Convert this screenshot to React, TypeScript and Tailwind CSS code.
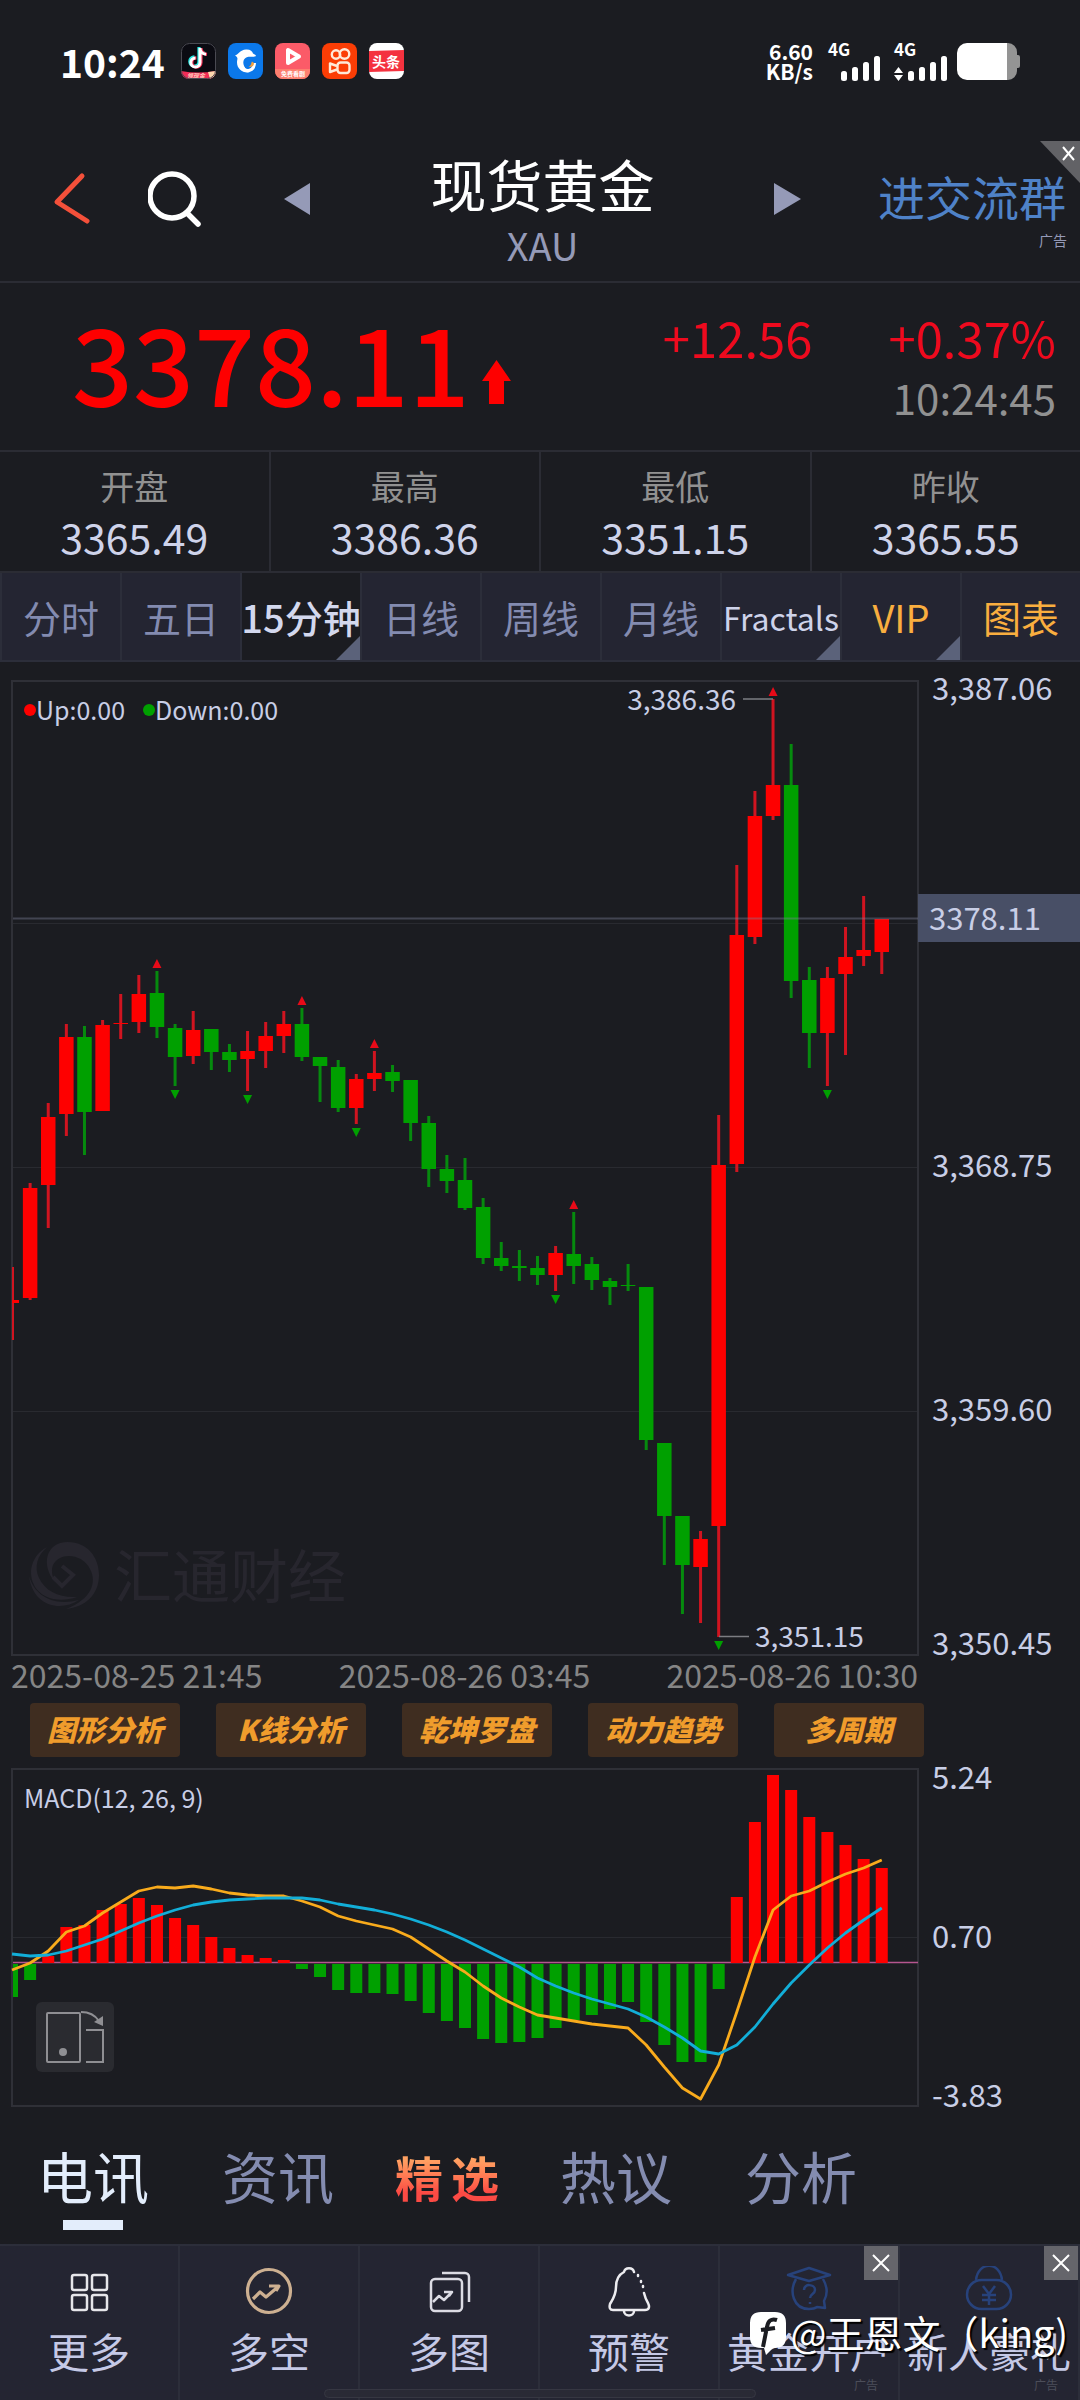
import type { ReactNode } from 'react';

type Candle = {
  up: boolean;
  top: number;
  bottom: number;
  high: number;
  low: number;
};

const STEP = 18.12;
const FIRST_X = 12;

const xAt = (i: number) => FIRST_X + i * STEP;

const c = (dir: 'r' | 'g', top: number, bottom: number, high: number, low: number): Candle => ({
  up: dir === 'r',
  top,
  bottom,
  high,
  low,
});

const CANDLES: Candle[] = [
  c('r', 1300, 1303, 1267, 1340),
  c('r', 1188, 1298, 1183, 1300),
  c('r', 1117, 1185, 1103, 1228),
  c('r', 1037, 1114, 1024, 1136),
  c('g', 1037, 1112, 1026, 1155),
  c('r', 1025, 1111, 1020, 1111),
  c('r', 1023, 1024, 994, 1039),
  c('r', 994, 1022, 975, 1033),
  c('g', 993, 1027, 971, 1038),
  c('g', 1028, 1057, 1024, 1086),
  c('r', 1030, 1056, 1011, 1064),
  c('g', 1029, 1052, 1029, 1070),
  c('g', 1052, 1060, 1044, 1072),
  c('r', 1051, 1059, 1031, 1091),
  c('r', 1036, 1051, 1022, 1068),
  c('r', 1024, 1036, 1011, 1053),
  c('g', 1024, 1057, 1008, 1061),
  c('g', 1057, 1066, 1057, 1102),
  c('g', 1067, 1108, 1060, 1112),
  c('r', 1079, 1108, 1074, 1124),
  c('r', 1073, 1079, 1051, 1091),
  c('g', 1072, 1081, 1065, 1092),
  c('g', 1080, 1123, 1080, 1141),
  c('g', 1123, 1169, 1116, 1187),
  c('g', 1169, 1181, 1155, 1193),
  c('g', 1180, 1208, 1158, 1210),
  c('g', 1207, 1258, 1198, 1264),
  c('g', 1258, 1266, 1242, 1271),
  c('g', 1266, 1268, 1250, 1281),
  c('g', 1268, 1275, 1256, 1285),
  c('r', 1253, 1275, 1246, 1291),
  c('g', 1254, 1266, 1212, 1284),
  c('g', 1264, 1280, 1257, 1290),
  c('g', 1281, 1287, 1278, 1305),
  c('g', 1285, 1286, 1264, 1291),
  c('g', 1287, 1440, 1287, 1450),
  c('g', 1443, 1516, 1443, 1565),
  c('g', 1516, 1565, 1516, 1614),
  c('r', 1539, 1567, 1531, 1623),
  c('r', 1165, 1526, 1115, 1637),
  c('r', 935, 1164, 865, 1172),
  c('r', 816, 937, 791, 944),
  c('r', 785, 816, 699, 820),
  c('g', 785, 981, 744, 998),
  c('g', 980, 1033, 967, 1068),
  c('r', 978, 1033, 967, 1086),
  c('r', 957, 974, 927, 1055),
  c('r', 950, 956, 896, 966),
  c('r', 919, 952, 919, 974),
];

const FRACTAL_UP = [8, 16, 20, 31, 42];
const FRACTAL_DOWN = [9, 13, 19, 30, 39, 45];

const MACD_ZERO = 1963;
const MACD_BARS = [
  1996, 1979, 1956, 1927, 1925, 1910, 1904, 1898, 1905, 1918, 1925, 1937, 1948, 1955, 1958, 1960,
  1968, 1976, 1989, 1992, 1992, 1993, 2000, 2012, 2020, 2027, 2038, 2042, 2041, 2037, 2027, 2019,
  2014, 2008, 2001, 2021, 2044, 2061, 2061, 1988, 1897, 1822, 1775, 1790, 1817, 1832, 1845, 1859,
  1868,
];
const DIF = [
  1970, 1963, 1951, 1932, 1926, 1913, 1902, 1891, 1887, 1888, 1886, 1889, 1893, 1895, 1896, 1896,
  1901, 1907, 1916, 1921, 1925, 1929, 1937, 1949, 1961, 1972, 1986, 1998, 2007, 2015, 2018, 2021,
  2024, 2026, 2028, 2045, 2067, 2088, 2099, 2065, 2012, 1957, 1910, 1896, 1891, 1882, 1874, 1868,
  1860,
];
const DEA = [
  1954, 1956, 1955, 1951, 1945, 1939, 1931, 1923, 1916, 1910, 1905, 1902, 1900, 1899, 1898, 1898,
  1898, 1900, 1904, 1907, 1910, 1914, 1919, 1925, 1932, 1940, 1949, 1958, 1967, 1978, 1986, 1993,
  1999, 2004, 2009, 2017, 2027, 2038, 2051, 2054, 2045, 2027, 2004, 1983, 1965, 1948, 1933, 1920,
  1908,
];

const STATS = [
  { label: '开盘', value: '3365.49' },
  { label: '最高', value: '3386.36' },
  { label: '最低', value: '3351.15' },
  { label: '昨收', value: '3365.55' },
];

const PERIODS = [
  { label: '分时', style: 'text-[38px] text-[#838bb0]' },
  { label: '五日', style: 'text-[38px] text-[#838bb0]' },
  { label: '15分钟', style: 'text-[38px] font-medium text-[#d3d8ee]', active: true, more: true },
  { label: '日线', style: 'text-[38px] text-[#838bb0]' },
  { label: '周线', style: 'text-[38px] text-[#838bb0]' },
  { label: '月线', style: 'text-[38px] text-[#838bb0]' },
  { label: 'Fractals', style: 'text-[32px] text-[#ced3ea]', more: true },
  { label: 'VIP', style: 'text-[38px] text-[#f9ae3f]', more: true },
  { label: '图表', style: 'text-[38px] text-[#f9ae3f]' },
];

const TOOLS = ['图形分析', 'K线分析', '乾坤罗盘', '动力趋势', '多周期'];

const linePoints = (ys: number[]) => ys.map((y, i) => `${xAt(i)},${y}`).join(' ');

function SignalBars() {
  return (
    <svg width="42" height="26" viewBox="0 0 42 26" fill="#fff">
      <rect x="1" y="16" width="6" height="10" rx="2.5" />
      <rect x="12" y="12" width="6" height="14" rx="2.5" />
      <rect x="23" y="7" width="6" height="19" rx="2.5" />
      <rect x="34" y="1" width="6" height="25" rx="2.5" />
    </svg>
  );
}

function AppIcons() {
  return (
    <div className="flex items-center gap-[12px]">
      <svg width="35" height="36" viewBox="0 0 35 36">
        <defs>
          <clipPath id="tk"><rect width="35" height="36" rx="8" /></clipPath>
        </defs>
        <g clipPath="url(#tk)">
          <rect width="35" height="36" fill="#0b0b12" />
          <path d="M19 5v14.500a4.600 4.600 0 1 1-4.600-4.600M19 6c.6 3 3 5 6 5.300" fill="none" stroke="#25e5e0" strokeWidth="3.200" transform="translate(-1 -1)" />
          <path d="M19 5v14.500a4.600 4.600 0 1 1-4.600-4.600M19 6c.6 3 3 5 6 5.300" fill="none" stroke="#fb3158" strokeWidth="3.200" transform="translate(1 0)" />
          <path d="M19 5v14.500a4.600 4.600 0 1 1-4.600-4.600M19 6c.6 3 3 5 6 5.300" fill="none" stroke="#fff" strokeWidth="3" />
          <path d="M0 28q17 3 35 0v8H0z" fill="#f02c56" />
          <path d="M27 29l8-1v5l-6 3z" fill="#ffd9b0" />
          <text x="6" y="35" fontSize="6" fontWeight="700" fontStyle="italic" fill="#ffd0c0">领现金</text>
        </g>
        <rect x=".5" y=".5" width="34" height="35" rx="8" fill="none" stroke="#4a4a52" />
      </svg>
      <svg width="35" height="36" viewBox="0 0 35 36">
        <rect width="35" height="36" rx="8" fill="#0b78ea" />
        <path d="M7 12.500c3.500-1 5-5.500 11-6 4-.3 6.500 1.500 7 4 1 .8 2.500 1 3 2.500-2.500 1.200-5 .6-7.500.8-5 .7-6 5.200-4.500 9 1 2.800 3 5 5.500 6.500-7 1-12.500-3.300-12.500-10 0-2 .6-3 .4-4.300-.4-1.200-1.400-1.800-2.400-2.500z" fill="#fff" />
        <path d="M15 25c3 4.500 11 3 11.500-5" fill="none" stroke="#fff" strokeWidth="3.200" />
        <path d="M20.500 24c3-1 2.500-4.500 3.500-5.500l2 1.500c0 3-2 4.500-5.500 4z" fill="#f0a040" />
      </svg>
      <svg width="35" height="36" viewBox="0 0 35 36">
        <rect width="35" height="36" rx="8" fill="#fb5b68" />
        <path d="M0 26h35v2a8 8 0 0 1-8 8H8a8 8 0 0 1-8-8z" fill="#fd7f6f" />
        <path d="M13 7v13l11-6.500z" fill="none" stroke="#fff" strokeWidth="4" strokeLinejoin="round" />
        <text x="6" y="33" fontSize="6" fontWeight="700" fill="#fff">免费看剧</text>
      </svg>
      <svg width="35" height="36" viewBox="0 0 35 36" fill="none" stroke="#ffe9d8" strokeWidth="2.400">
        <rect width="35" height="36" rx="8" fill="#fb3d05" stroke="none" />
        <circle cx="14" cy="11.500" r="4.200" />
        <circle cx="22.500" cy="11" r="4.800" />
        <rect x="15.500" y="19.500" width="12" height="10.500" rx="3" />
        <path d="M15 23l-7-2.500v8.500l7-2.500" strokeLinejoin="round" />
      </svg>
      <svg width="35" height="36" viewBox="0 0 35 36">
        <rect width="35" height="36" rx="8" fill="#fff" />
        <path d="M0 8l35-1v21L0 29z" fill="#f4323f" />
        <text x="3" y="24" fontSize="14" fontWeight="700" fill="#fff">头条</text>
      </svg>
    </div>
  );
}

function StatusBar() {
  return (
    <div className="flex h-[122px] items-center justify-between px-[60px] text-white">
      <div className="flex items-center gap-[16px]">
        <span className="text-[39px] font-bold leading-none">10:24</span>
        <AppIcons />
      </div>
      <div className="flex items-center font-bold">
        <div className="mr-[15px] text-right text-[21px] leading-[20px]">
          <p>6.60</p>
          <p>KB/s</p>
        </div>
        <div className="mr-[12px]">
          <p className="text-[17px] leading-[13px]">4G</p>
          <div className="flex justify-end pl-[12px]"><SignalBars /></div>
        </div>
        <div className="mr-[8px]">
          <p className="text-[17px] leading-[13px]">4G</p>
          <div className="flex items-end gap-[4px]">
            <svg width="9" height="14" viewBox="0 0 9 14" fill="#fff">
              <path d="M4.500 0L9 6H0zM4.500 14L0 8h9z" />
            </svg>
            <SignalBars />
          </div>
        </div>
        <svg width="63" height="37" viewBox="0 0 63 37">
          <path d="M50 0h1a9 9 0 0 1 9 9v3h1a2 2 0 0 1 2 2v9a2 2 0 0 1-2 2h-1v3a9 9 0 0 1-9 9h-1z" fill="#949494" />
          <path d="M10 0h40v37H10A10 10 0 0 1 0 27V10A10 10 0 0 1 10 0z" fill="#fff" />
        </svg>
      </div>
    </div>
  );
}

function Header() {
  return (
    <header className="relative flex h-[161px] items-center justify-between border-b-2 border-[#2b2c34] pb-[6px] pl-[52px] pr-[14px]">
      <div className="flex items-center">
        <button aria-label="返回" className="mr-[56px]">
          <svg width="40" height="56" viewBox="0 0 40 56" fill="none" stroke="#f4503a" strokeWidth="5" strokeLinecap="round" strokeLinejoin="round">
            <path d="M30 5L5 31l30 19" />
          </svg>
        </button>
        <button aria-label="搜索" className="mr-[82px]">
          <svg width="54" height="58" viewBox="0 0 54 58" fill="none" stroke="#fff" strokeWidth="5.500" strokeLinecap="round">
            <circle cx="24" cy="26" r="22" />
            <path d="M39 43l11 11" />
          </svg>
        </button>
        <button aria-label="上一个">
          <svg width="27" height="32" viewBox="0 0 27 32"><path d="M0 16L26 0v32z" fill="#959ab7" /></svg>
        </button>
      </div>
      <div className="self-end pb-[6px] text-center">
        <h1 className="text-[56px] leading-[56px] text-white">现货黄金</h1>
        <p className="mt-[10px] text-[38px] leading-[48px] text-[#959ab7]">XAU</p>
      </div>
      <div className="flex items-center">
        <button aria-label="下一个" className="mr-[77px]">
          <svg width="27" height="32" viewBox="0 0 27 32"><path d="M27 16L0 0v32z" fill="#959ab7" /></svg>
        </button>
        <a href="#group" className="pb-[6px] text-[47px] leading-[52px] text-[#4f82c8]">进交流群</a>
      </div>
      <span className="absolute bottom-[33px] right-[13px] text-[14px] leading-[16px] text-[#959ab7]">广告</span>
      <button aria-label="关闭广告" className="absolute right-0 top-[19px]">
        <svg width="40" height="42" viewBox="0 0 40 42">
          <path d="M0 0h40v42z" fill="#626266" />
          <path d="M23 6l11 13M34 6L23 19" stroke="#fff" strokeWidth="2" />
        </svg>
      </button>
    </header>
  );
}

function PriceChart() {
  return (
    <svg viewBox="0 662 1080 996" className="block w-full overflow-visible" fontSize="31" fill="#c8cee6">
      <rect x="12" y="681" width="906" height="974" fill="none" stroke="#2f3037" strokeWidth="2" />
      {[923.5, 1167.5, 1411.5].map(y => (
        <path key={y} d={`M13 ${y}H917`} stroke="#292a30" strokeWidth="1" />
      ))}

      <g fill="#27262e">
        <path d="M55 1582c-14-16-10-40 13-40 19 0 31 15 31 33 0 20-14 32-33 34 26-10 31-27 24-40-7-15-30-18-37-4-2 5-1 11 2 17z" />
        <path d="M47 1547c-10 9-13 20-8 31 6 13 20 20 38 19-17 6-34 2-42-10-8-14-4-31 12-40z" />
        <path d="M29 1576c5 18 22 31 50 24-18 12-46 7-50-24z" />
        <path d="M62 1566l11 9-11 11-9-9" fill="none" stroke="#27262e" strokeWidth="4" />
        <text x="114" y="1598" fontSize="58">汇通财经</text>
      </g>

      <g>
        {CANDLES.map((k, i) => {
          const x = xAt(i);
          const clip = i === 0;
          return (
            <g key={i} fill={k.up ? '#fe0000' : '#00a000'}>
              <rect x={clip ? 12 : x - 1.5} y={k.high} width={clip ? 2 : 3} height={k.low - k.high} fill={k.up ? '#d01420' : '#068a0e'} />
              <rect x={clip ? 12 : x - 7.25} y={k.top} width={clip ? 7 : 14.5} height={k.bottom - k.top} />
            </g>
          );
        })}
        {FRACTAL_UP.map(i => (
          <path key={i} d={`M${xAt(i)} ${CANDLES[i].high - 12}l4.500 9h-9z`} fill="#e80a18" />
        ))}
        {FRACTAL_DOWN.map(i => (
          <path key={i} d={`M${xAt(i)} ${CANDLES[i].low + 13}l4.500-9h-9z`} fill="#00a000" />
        ))}
      </g>

      <path d="M13 918.500H918" stroke="#7d819b" strokeOpacity=".4" strokeWidth="2" />
      <path d="M743 699H773M719 1636.500H749" stroke="#7c7d82" strokeWidth="1.500" />
      <text x="736" y="710" fontSize="28" textAnchor="end">3,386.36</text>
      <text x="755" y="1647" fontSize="28">3,351.15</text>

      <circle cx="30" cy="710" r="6" fill="#fe0000" />
      <text x="36" y="720" fontSize="25">Up:0.00</text>
      <circle cx="149" cy="710" r="6" fill="#00a000" />
      <text x="155" y="720" fontSize="25">Down:0.00</text>

      <text x="932" y="700">3,387.06</text>
      <rect x="918" y="894" width="162" height="48" fill="#484f66" />
      <text x="929" y="930">3378.11</text>
      <text x="932" y="1177">3,368.75</text>
      <text x="932" y="1421">3,359.60</text>
      <text x="932" y="1655">3,350.45</text>
    </svg>
  );
}

function MacdChart() {
  return (
    <svg viewBox="0 1757 1080 351" className="block w-full overflow-visible" fontSize="31" fill="#c8cee6">
      <rect x="12" y="1769" width="906" height="337" fill="none" stroke="#2f3037" strokeWidth="2" />
      <path d="M13 1937.500H917" stroke="#292a30" strokeWidth="1" />
      <path d="M13 1962.500H918" stroke="#b5558f" strokeWidth="1.500" />
      {MACD_BARS.map((y, i) => {
        const left = Math.max(xAt(i) - 6, 13);
        const right = xAt(i) + 6;
        const up = y < MACD_ZERO;
        return (
          <rect
            key={i}
            x={left}
            y={up ? y : MACD_ZERO + 1}
            width={right - left}
            height={Math.max(Math.abs(MACD_ZERO - y), 1)}
            fill={up ? '#fe0000' : '#00a000'}
          />
        );
      })}
      <polyline points={linePoints(DIF)} fill="none" stroke="#f9ab1c" strokeWidth="2.800" strokeLinejoin="round" />
      <polyline points={linePoints(DEA)} fill="none" stroke="#12aed8" strokeWidth="2.800" strokeLinejoin="round" />
      <text x="24" y="1808" fontSize="25">MACD(12, 26, 9)</text>

      <g fill="none" stroke="#8f8f93" strokeWidth="2">
        <rect x="36" y="2002" width="78" height="70" rx="6" fill="#2a2b30" stroke="none" />
        <rect x="47" y="2013" width="33" height="49" rx="1" />
        <path d="M86 2030h17v32H86" />
        <path d="M81 2012c8 0 14 3 18 9" />
        <path d="M94 2022l9-6v10z" fill="#8f8f93" stroke="none" />
        <circle cx="63" cy="2052" r="4" fill="#8f8f93" stroke="none" />
      </g>

      <text x="932" y="1789">5.24</text>
      <text x="932" y="1948">0.70</text>
      <text x="932" y="2107">-3.83</text>
    </svg>
  );
}

function NewsTabs() {
  const plain = 'px-[12px] text-[56px] leading-[64px]';
  return (
    <nav className="flex h-[136px] items-start gap-[49px] px-[25px] pt-[35px]">
      <button className={`${plain} flex flex-col items-center text-[#e3edfb]`}>
        电讯
        <span className="mt-[13px] h-[10px] w-[60px] bg-[#e3edfb]" />
      </button>
      <button className={`${plain} text-[#848cb0]`}>资讯</button>
      <button className="flex gap-[8px] text-[48px] font-bold leading-[66px]">
        <span className="bg-linear-to-b from-[#ffa162] from-25% to-[#fb4a44] to-75% bg-clip-text text-transparent">精</span>
        <span className="bg-linear-to-b from-[#ffa162] from-25% to-[#fb4a44] to-75% bg-clip-text text-transparent">选</span>
      </button>
      <button className={`${plain} text-[#848cb0]`}>热议</button>
      <button className={`${plain} text-[#848cb0]`}>分析</button>
    </nav>
  );
}

function NavItem({ label, ad, children }: { label: string; ad?: boolean; children: ReactNode }) {
  return (
    <div className="relative flex-1 border-r-2 border-[#2c2e3a] last:border-r-0">
      <button className="flex w-full flex-col items-center pt-[20px]">
        <svg width="50" height="52" viewBox="0 0 50 52" fill="none" strokeWidth="2.500" strokeLinejoin="round">
          {children}
        </svg>
        <span className="mt-[12px] whitespace-nowrap text-[41px] leading-[40px] text-[#c5c9e6]">{label}</span>
      </button>
      {ad && (
        <>
          <button aria-label="关闭广告" className="absolute right-0 top-0 flex size-[34px] items-center justify-center bg-[#65656b]">
            <svg width="18" height="18" viewBox="0 0 18 18" stroke="#fff" strokeWidth="2"><path d="M1 1l16 16M17 1L1 17" /></svg>
          </button>
          <span className="absolute bottom-[8px] right-[20px] text-[12px] leading-[14px] text-[#4c4e5a]">广告</span>
        </>
      )}
    </div>
  );
}

function BottomNav() {
  return (
    <nav className="relative flex h-[156px] border-t-2 border-[#2c2e3a] bg-[#242532]">
      <NavItem label="更多">
        <g stroke="#e6e6ea">
          <rect x="8" y="9" width="15" height="15" rx="2" />
          <rect x="28" y="9" width="15" height="15" rx="2" />
          <rect x="8" y="29" width="15" height="15" rx="2" />
          <rect x="28" y="29" width="15" height="15" rx="2" />
        </g>
      </NavItem>
      <NavItem label="多空">
        <g stroke="#cdb091" strokeWidth="3.200">
          <circle cx="25" cy="25" r="21.500" />
          <path d="M9 33l7-7 6 5 13-11M25 20h10l-3 5" />
        </g>
      </NavItem>
      <NavItem label="多图">
        <g stroke="#dcdce4">
          <rect x="7" y="13" width="31" height="32" rx="4" />
          <path d="M18 7h23a4 4 0 0 1 4 4v25M9 36l6-6 5 4 8-8M20 26h8l-3 4" />
        </g>
      </NavItem>
      <NavItem label="预警">
        <g stroke="#ececf0" strokeLinecap="round">
          <path d="M20 6c1-5 9-5 10 0M20 6c-6 3-8 8-8 15 0 8-3 12-6 17-1 4 0 6 3 6h32c4 0 5-3 3-7-2-3-3-6-4-10" />
          <path d="M20 45c0 6 10 6 10 0" />
          <path d="M34 9v1M37 15v1M39 20v1" />
        </g>
      </NavItem>
      <NavItem label="黄金开户" ad>
        <g stroke="#27427b">
          <path d="M4 9l21-7 21 7-21 6z" />
          <path d="M12 13c-7 12-3 30 13 30 4 0 6-.5 8-2l8 1-1-7c4-7 3-15-1-22" />
          <path d="M20 24c0-7 11-6 11 0 0 4-5 4-5 8M26 36v2" />
        </g>
      </NavItem>
      <NavItem label="新人豪礼" ad>
        <g stroke="#27427b">
          <path d="M12 14C14-5 36-5 38 14" />
          <rect x="3" y="14" width="44" height="29" rx="14.500" />
          <path d="M19 20l6 8 6-8M25 28v11M18 29h14M18 34h14" />
        </g>
      </NavItem>
      <div className="absolute bottom-[2px] left-[30%] h-[9px] w-[40%] rounded-full border border-[#363742] bg-[#292a35]" />
      <div className="absolute right-[12px] top-[62px] flex items-center whitespace-nowrap text-[38px] leading-[48px] text-white [text-shadow:2px_2px_1px_#000]">
        <svg width="38" height="46" viewBox="0 0 38 46" className="mr-[4px]">
          <path d="M12 3h14q11 0 11 11v14q0 11-11 11h-2l-7 7-2-7h-3Q1 39 1 28V14Q1 3 12 3z" fill="#fff" />
          <path d="M28 11c-6-2-9 1-10 7l-4 20M12 21l14-2" fill="none" stroke="#1b1c21" strokeWidth="4" />
        </svg>
        @王恩文（king)
      </div>
    </nav>
  );
}

export default function App() {
  return (
    <div className="min-h-screen w-full overflow-hidden bg-[#1b1c21] font-['Noto_Sans_CJK_SC',sans-serif]">
      <StatusBar />
      <Header />

      <section className="flex h-[169px] justify-between border-b-2 border-[#2b2c34] pl-[72px] pr-[24px]">
        <div className="flex items-center pb-[12px]">
          <strong className="text-[107px] font-medium leading-none text-[#fe0000]">3378.11</strong>
          <svg width="29" height="44" viewBox="0 0 29 44" className="ml-[12px] mt-[42px]"><path d="M14.500 0L29 21h-7v23H7V21H0z" fill="#fe0000" /></svg>
        </div>
        <div className="pt-[24px] text-right">
          <div className="flex gap-[76px] text-[49px] leading-[60px] text-[#ee0a1e]">
            <span>+12.56</span>
            <span>+0.37%</span>
          </div>
          <p className="text-[42px] leading-[60px] text-[#919191]">10:24:45</p>
        </div>
      </section>

      <dl className="flex h-[121px] border-b-2 border-[#2b2c34]">
        {STATS.map(s => (
          <div key={s.label} className="flex-1 border-r-2 border-[#2b2c34] pt-[10px] text-center last:border-r-0">
            <dt className="text-[34px] leading-[48px] text-[#919191]">{s.label}</dt>
            <dd className="text-[41px] leading-[52px] text-[#ced3ea]">{s.value}</dd>
          </div>
        ))}
      </dl>

      <nav className="flex h-[89px] border-b-2 border-[#2c2e3a]">
        {PERIODS.map(p => (
          <button
            key={p.label}
            className={`relative flex w-0 flex-1 items-center justify-center whitespace-nowrap border-l-2 border-[#2c2e3a] ${p.style} ${p.active ? 'bg-[#1b1c21]' : 'bg-[#242532]'}`}
          >
            {p.label}
            {p.more && (
              <svg width="24" height="24" viewBox="0 0 24 24" className="absolute bottom-0 right-0"><path d="M24 0v24H0z" fill="#5b627a" /></svg>
            )}
          </button>
        ))}
      </nav>

      <PriceChart />

      <div className="flex w-[85%] justify-between pl-[11px] text-[32px] leading-[32px] text-[#858585]">
        <span>2025-08-25 21:45</span>
        <span>2025-08-26 03:45</span>
        <span>2025-08-26 10:30</span>
      </div>

      <div className="mt-[13px] flex gap-[36px] px-[30px]">
        {TOOLS.map(t => (
          <button key={t} className="h-[54px] w-[150px] rounded-[4px] bg-[#3f2d20] pb-[2px] text-[29px] font-black italic text-[#f09c2c]">
            {t}
          </button>
        ))}
      </div>

      <MacdChart />
      <NewsTabs />
      <BottomNav />
    </div>
  );
}
